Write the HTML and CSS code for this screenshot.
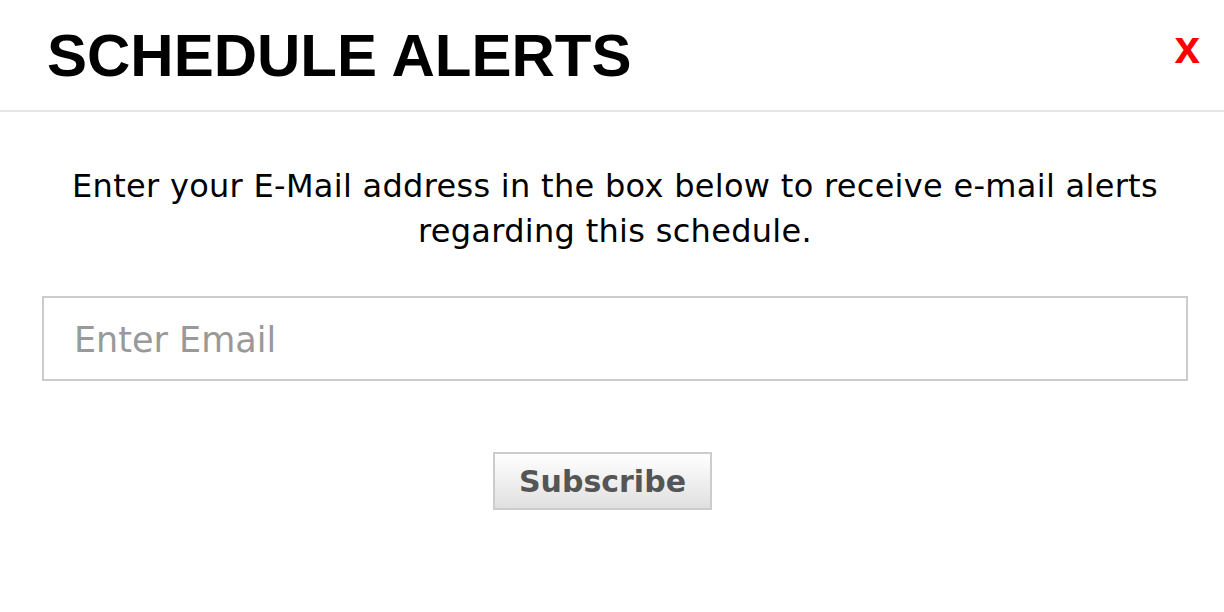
FILE: index.html
```html
<!DOCTYPE html>
<html lang="en">
<head>
    <meta charset="UTF-8">
    <meta name="viewport" content="width=device-width, initial-scale=1.0">
    <title>Schedule Alerts</title>
    <link rel="stylesheet" href="styles.css">
</head>
<body>
    <div class="modal">
        <header class="modal-header">
            <h1>SCHEDULE ALERTS</h1>
            <a href="#" class="close">x</a>
        </header>
        <section class="modal-body">
            <p class="intro">Enter your E-Mail address in the box below to receive e-mail alerts regarding this schedule.</p>
            <input type="email" class="email-input" placeholder="Enter Email">
            <div class="actions">
                <button class="button">Subscribe</button>
            </div>
        </section>
    </div>
</body>
</html>
```

FILE: styles.css
```css
body {
    margin: 0;
    background-color: #fff;
    color: #000;
    font-family: "DejaVu Sans", Verdana, sans-serif;
}

.modal-header {
    display: flex;
    justify-content: space-between;
    align-items: center;
    height: 110px;
    padding: 0 24px 0 47px;
    border-bottom: 2px solid #e5e5e5;
}

.modal-header h1 {
    margin: 0;
    font-family: "Liberation Sans", Arial, sans-serif;
    font-size: 60px;
    font-weight: bold;
}

.close {
    margin-top: -16px;
    color: #f00;
    text-decoration: none;
    font-family: "Liberation Sans", Arial, sans-serif;
    font-weight: bold;
    font-size: 46px;
    line-height: 1;
}

.modal-body {
    padding: 52px 36px 0 42px;
}

.intro {
    margin: 0 0 42px;
    text-align: center;
    font-size: 32px;
    letter-spacing: 0.3px;
    line-height: 45px;
}

.email-input {
    display: block;
    box-sizing: border-box;
    width: 100%;
    height: 85px;
    padding: 3px 30px 0;
    border: 2px solid #ccc;
    font-family: "DejaVu Sans", Verdana, sans-serif;
    font-size: 35px;
    color: #333;
}

.email-input::placeholder {
    color: #999;
}

.actions {
    display: flex;
    justify-content: center;
    margin-top: 71px;
    padding-right: 25px;
}

.button {
    width: 219px;
    height: 58px;
    border: 2px solid #ccc;
    background: linear-gradient(#fff, #e0e0e0);
    color: #555;
    font-family: "DejaVu Sans", Verdana, sans-serif;
    font-size: 30px;
    font-weight: bold;
    cursor: pointer;
}
```
